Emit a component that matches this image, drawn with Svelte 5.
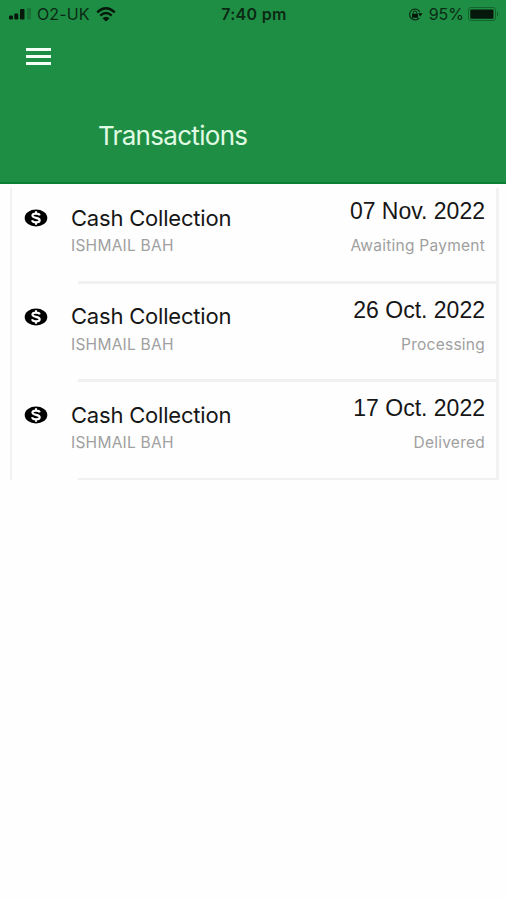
<script lang="ts">
	type Transaction = { title:string, name:string, date:string, status:string };

	const transactions:Transaction[] = [
		{ title: "Cash Collection", name: "ISHMAIL BAH", date: "07 Nov. 2022", status: "Awaiting Payment" },
		{ title: "Cash Collection", name: "ISHMAIL BAH", date: "26 Oct. 2022", status: "Processing" },
		{ title: "Cash Collection", name: "ISHMAIL BAH", date: "17 Oct. 2022", status: "Delivered" },
	];
</script>

<div class="app_root">
	<header class="header">
		<div class="status_bar">
			<div class="status_left">
				<svg class="signal" width="24" height="12" viewBox="0 0 24 12">
					<rect x="0" y="7.5" width="4" height="4" rx="1.2" />
					<rect x="5.3" y="5.5" width="4" height="6" rx="1" />
					<rect x="11" y="1" width="4.5" height="10.5" rx="1" />
					<rect x="18" y="0" width="4" height="11.5" rx="1" opacity="0.22" />
				</svg>
				<span class="carrier">O2-UK</span>
				<svg class="wifi" width="20" height="15" viewBox="0 0 20 15">
					<path d="M1.2 5.3Q10-2.6 18.8 5.3M4.3 8.6Q10 3.6 15.7 8.6" fill="none" stroke="#06170b" stroke-width="2.4" />
					<path d="M6.4 11.2Q10 8.2 13.6 11.2L10 14.4Z" />
				</svg>
			</div>
			<span class="time">7:40 pm</span>
			<div class="status_right">
				<svg class="lock" width="15" height="13" viewBox="0 0 15 13">
					<path d="M11.3 9.8A5.4 5.4 0 1 1 11.8 4" fill="none" stroke="#0b2a14" stroke-width="1.2" />
					<path d="M10 5.2h4.6L12.2 8.6Z" />
					<rect x="4" y="5.8" width="6" height="4" rx="0.6" />
					<path d="M5.2 6V4.8a1.8 1.8 0 0 1 3.6 0V6" fill="none" stroke="#0b2a14" />
				</svg>
				<span class="percent">95%</span>
				<svg class="battery" width="31" height="14" viewBox="0 0 31 14">
					<rect x="0.5" y="0.5" width="27" height="13" rx="2.5" fill="none" stroke="#0c4a20" opacity="0.6" />
					<rect x="2.3" y="2.4" width="23.2" height="9.4" rx="1" />
					<path d="M29 4.5Q31 7 29 9.5Z" opacity="0.5" />
				</svg>
			</div>
		</div>
		<button class="menu" aria-label="menu">
			<span></span>
			<span></span>
			<span></span>
		</button>
		<h1>Transactions</h1>
	</header>

	<ul class="list">
		{#each transactions as item}
			<li class="row">
				<svg class="coin" width="24" height="18" viewBox="0 0 24 18">
					<ellipse cx="12" cy="9" rx="11.3" ry="8.5" />
					<path d="M15.8 6.4C15.2 5 13.7 4.6 12 4.6c-2.2 0-3.6.7-3.6 2 0 3 7.3 1.5 7.3 4.6 0 1.4-1.5 2.2-3.7 2.2-2.1 0-3.6-.7-4-2.1M12 2.2v2.4M12 13.4v2.4" fill="none" stroke="#fff" stroke-width="2.1" />
				</svg>
				<div class="details">
					<span class="title">{item.title}</span>
					<span class="name">{item.name}</span>
				</div>
				<div class="meta">
					<span class="date">{item.date}</span>
					<span class="state">{item.status}</span>
				</div>
			</li>
		{/each}
	</ul>
</div>

<style>
	:global(body) {
		background: #fefefe;
	}

	.app_root {
		min-height: 100vh;
		font-family: Inter, "Liberation Sans", sans-serif;
		color: #161616;
	}

	.header {
		height: 184px;
		box-sizing: border-box;
		background: #1f8e45;
		border-bottom: 2px solid #0b8034;
	}

	.status_bar {
		display: grid;
		grid-template-columns: 1fr auto 1fr;
		align-items: center;
		height: 28px;
		padding: 0 7px 0 9px;
		color: #0b2a14;
		fill: #06170b;
		font-size: 16px;
	}

	.status_left,
	.status_right {
		display: flex;
		align-items: center;
	}

	.status_right {
		justify-content: flex-end;
	}

	.carrier {
		margin: 0 6px 0 4px;
		letter-spacing: 0.1px;
	}

	.time {
		font-weight: 600;
		letter-spacing: 0.3px;
	}

	.percent {
		margin: 0 4px 0 6px;
	}

	.menu {
		display: flex;
		flex-direction: column;
		gap: 4px;
		width: 25px;
		margin: 20px 0 0 26px;
		padding: 0;
		border: none;
		background: none;
	}

	.menu span {
		height: 3px;
		width: 100%;
		background: #f4fff5;
	}

	h1 {
		margin: 55px 0 0 98px;
		font-size: 26px;
		font-weight: 400;
		line-height: 32px;
		letter-spacing: -0.7px;
		color: #e0fbe3;
	}

	.list {
		list-style: none;
		margin: 4px 7px 0 10px;
		padding: 0;
	}

	.row {
		display: flex;
		height: 98.5px;
		box-sizing: border-box;
		padding: 0 11px 0 12px;
		border-left: 2px solid #f2f2f2;
		border-right: 3px solid #f2f2f2;
		background: linear-gradient(#f1f1f1, #f1f1f1) 66px 92.5px / 100% 3px no-repeat;
	}

	.row:last-child {
		height: 95px;
	}

	.coin {
		margin-top: 21px;
	}

	.details,
	.meta {
		display: flex;
		flex-direction: column;
	}

	.details {
		margin: 15.5px 0 0 23px;
	}

	.meta {
		margin: 9px 0 0 auto;
		align-items: flex-end;
	}

	.title {
		font-size: 22px;
		line-height: 28px;
		font-weight: 400;
		letter-spacing: -0.2px;
	}

	.name,
	.state {
		font-size: 15.5px;
		line-height: 20px;
		letter-spacing: 0.25px;
		color: #a0a0a0;
	}

	.name {
		margin-top: 4.5px;
	}

	.date {
		font-family: "Liberation Sans", Arial, sans-serif;
		font-size: 23px;
		line-height: 28px;
	}

	.state {
		margin-top: 11px;
	}
</style>
